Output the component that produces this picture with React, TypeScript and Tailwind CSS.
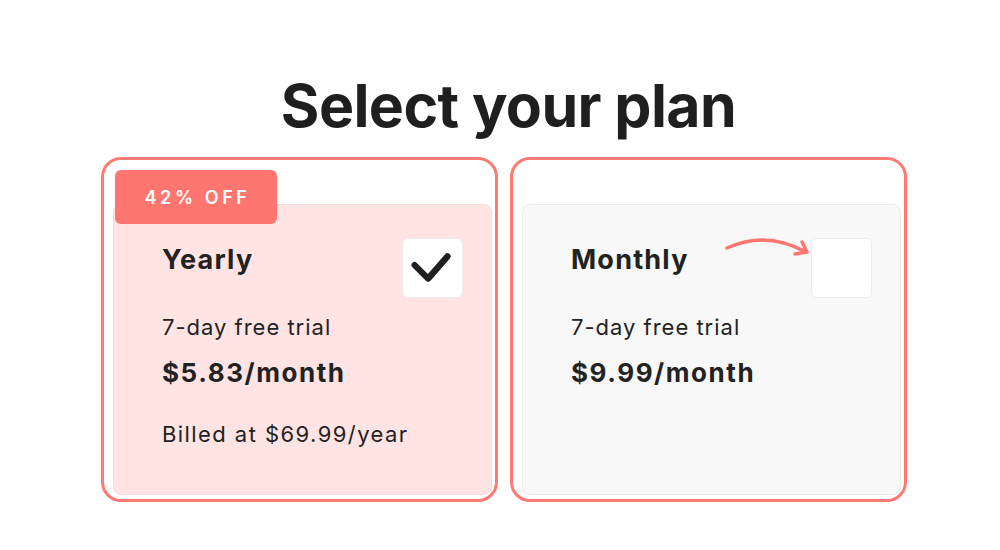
import type { ReactNode } from 'react'

const font = { fontFamily: 'Inter, "Noto Sans", sans-serif' }

function PlanCard({ selected, badge, children }: { selected?: boolean; badge?: string; children: ReactNode }) {
  return (
    <div className="relative box-border flex h-[345px] w-[397px] flex-col rounded-[20px] border-[3px] border-[#fe7b74] bg-white pt-[44px] pr-[3px] pb-[4px] pl-[9px]">
      <div
        className={`relative flex-1 rounded-[8px] border pt-[33px] pr-[28px] pl-[48px] ${
          selected ? 'border-[#f3dcdb] bg-[#ffe4e3]' : 'border-[#ebebeb] bg-[#f8f8f8]'
        }`}
      >
        {children}
      </div>
      {badge && (
        <div className="absolute top-[10px] left-[11px] flex h-[54px] w-[162px] items-center justify-center rounded-[6px] bg-[#ff7670] pl-[3px] text-[18px] font-semibold tracking-[0.2em] text-white">
          {badge}
        </div>
      )}
    </div>
  )
}

function Checkbox({ checked }: { checked?: boolean }) {
  return (
    <div className="flex h-[60px] w-[61px] items-center justify-center rounded-[6px] border border-[#ececec] bg-white">
      {checked && (
        <svg width="61" height="60" viewBox="0 0 61 60" fill="none">
          <path d="M12 27 L26 41 L46 18" stroke="#1f1f1f" strokeWidth="6.5" strokeLinecap="round" strokeLinejoin="round" />
        </svg>
      )}
    </div>
  )
}

export default function App() {
  return (
    <div className="flex h-[550px] w-[1000px] flex-col items-center bg-white text-[#222]" style={font}>
      <h1 className="mt-[74px] ml-[17px] text-[59px] leading-[64px] font-bold tracking-[-0.01em] text-[#1f1f1f]">
        Select your plan
      </h1>

      <div className="mt-[19px] ml-[8px] flex gap-[12px]">
        <PlanCard selected badge="42% OFF">
          <div className="flex items-start justify-between">
            <div className="mt-[6px] text-[27px] leading-[32px] font-bold tracking-[0.045em]">Yearly</div>
            <Checkbox checked />
          </div>
          <div className="mt-[15px] text-[22px] leading-[28px] tracking-[0.045em]">7-day free trial</div>
          <div className="mt-[16px] text-[26px] leading-[32px] font-bold tracking-[0.06em]">$5.83/month</div>
          <div className="mt-[31px] text-[22px] leading-[28px] tracking-[0.065em]">Billed at $69.99/year</div>
        </PlanCard>

        <PlanCard>
          <div className="flex items-start justify-between">
            <div className="mt-[6px] text-[27px] leading-[32px] font-bold tracking-[0.045em]">Monthly</div>
            <Checkbox />
          </div>
          <div className="mt-[15px] text-[22px] leading-[28px] tracking-[0.045em]">7-day free trial</div>
          <div className="mt-[16px] text-[26px] leading-[32px] font-bold tracking-[0.06em]">$9.99/month</div>
          <svg
            className="absolute top-[27px] left-[201px]"
            width="86"
            height="26"
            viewBox="0 0 86 26"
            fill="none"
          >
            <path d="M3 16 Q42 -2 82 20" stroke="#ff7670" strokeWidth="3.5" strokeLinecap="round" />
            <path d="M71 22 L83 20 L78 10" stroke="#ff7670" strokeWidth="3.5" strokeLinecap="round" strokeLinejoin="round" />
          </svg>
        </PlanCard>
      </div>
    </div>
  )
}
